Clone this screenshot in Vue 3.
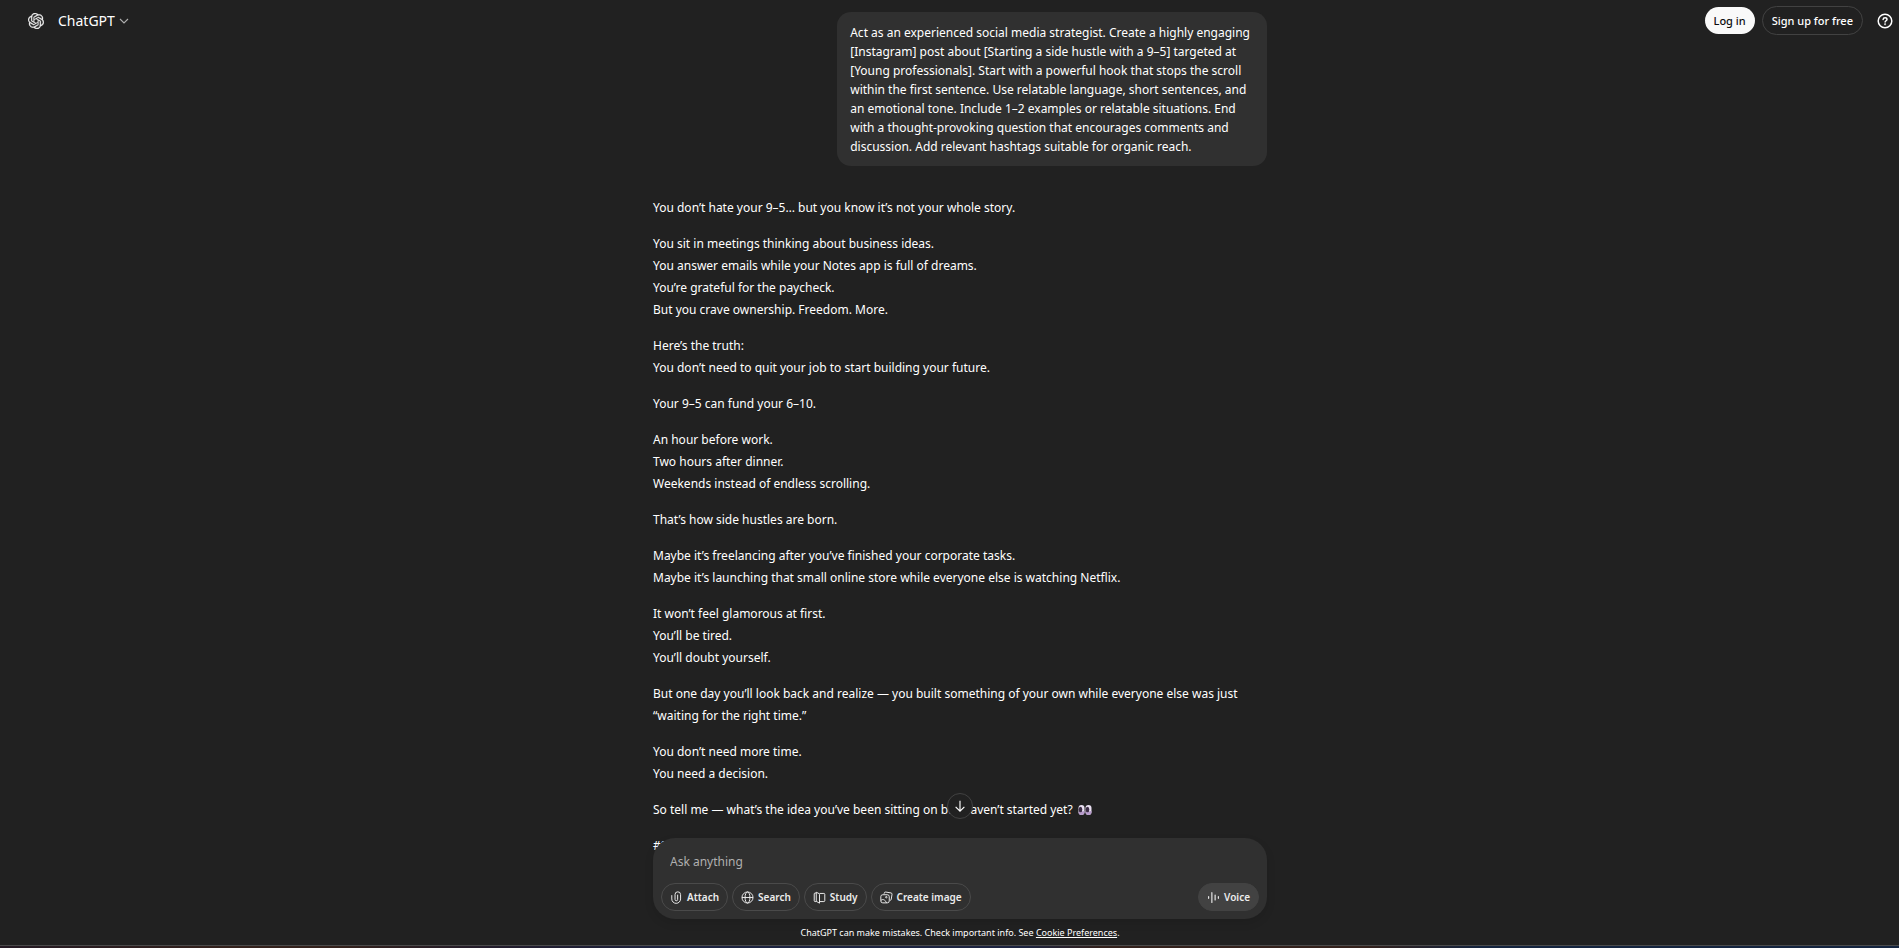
<script setup>
import { ref } from 'vue'

const message = ref('')

const prompt =
  'Act as an experienced social media strategist. Create a highly engaging [Instagram] post about [Starting a side hustle with a 9–5] targeted at [Young professionals]. Start with a powerful hook that stops the scroll within the first sentence. Use relatable language, short sentences, and an emotional tone. Include 1–2 examples or relatable situations. End with a thought-provoking question that encourages comments and discussion. Add relevant hashtags suitable for organic reach.'

const paragraphs = [
  ['You don’t hate your 9–5… but you know it’s not your whole story.'],
  [
    'You sit in meetings thinking about business ideas.',
    'You answer emails while your Notes app is full of dreams.',
    'You’re grateful for the paycheck.',
    'But you crave ownership. Freedom. More.',
  ],
  ['Here’s the truth:', 'You don’t need to quit your job to start building your future.'],
  ['Your 9–5 can fund your 6–10.'],
  ['An hour before work.', 'Two hours after dinner.', 'Weekends instead of endless scrolling.'],
  ['That’s how side hustles are born.'],
  [
    'Maybe it’s freelancing after you’ve finished your corporate tasks.',
    'Maybe it’s launching that small online store while everyone else is watching Netflix.',
  ],
  ['It won’t feel glamorous at first.', 'You’ll be tired.', 'You’ll doubt yourself.'],
  [
    'But one day you’ll look back and realize — you built something of your own while everyone else was just “waiting for the right time.”',
  ],
  ['You don’t need more time.', 'You need a decision.'],
]
</script>

<template>
  <div class="chat">
    <header class="topbar">
      <a href="#" class="logo" aria-label="Home">
        <svg viewBox="0 0 24 24" fill="currentColor" stroke="currentColor" stroke-width="0.4">
          <path d="M22.2819 9.8211a5.9847 5.9847 0 0 0-.5157-4.9108 6.0462 6.0462 0 0 0-6.5098-2.9A6.0651 6.0651 0 0 0 4.9807 4.1818a5.9847 5.9847 0 0 0-3.9977 2.9 6.0462 6.0462 0 0 0 .7427 7.0966 5.98 5.98 0 0 0 .511 4.9107 6.051 6.051 0 0 0 6.5146 2.9001A5.9847 5.9847 0 0 0 13.2599 24a6.0557 6.0557 0 0 0 5.7718-4.2058 5.9894 5.9894 0 0 0 3.9977-2.9001 6.0557 6.0557 0 0 0-.7475-7.0729zm-9.022 12.6081a4.4755 4.4755 0 0 1-2.8764-1.0408l.1419-.0804 4.7783-2.7582a.7948.7948 0 0 0 .3927-.6813v-6.7369l2.02 1.1686a.071.071 0 0 1 .038.052v5.5826a4.504 4.504 0 0 1-4.4945 4.4944zm-9.6607-4.1254a4.4708 4.4708 0 0 1-.5346-3.0137l.142.0852 4.783 2.7582a.7712.7712 0 0 0 .7806 0l5.8428-3.3685v2.3324a.0804.0804 0 0 1-.0332.0615L9.74 19.9502a4.4992 4.4992 0 0 1-6.1408-1.6464zM2.3408 7.8956a4.485 4.485 0 0 1 2.3655-1.9728V11.6a.7664.7664 0 0 0 .3879.6765l5.8144 3.3543-2.0201 1.1685a.0757.0757 0 0 1-.071 0l-4.8303-2.7865A4.504 4.504 0 0 1 2.3408 7.872zm16.5963 3.8558L13.1038 8.364 15.1192 7.2a.0757.0757 0 0 1 .071 0l4.8303 2.7913a4.4944 4.4944 0 0 1-.6765 8.1042v-5.6772a.79.79 0 0 0-.407-.667zm2.0107-3.0231l-.142-.0852-4.7735-2.7818a.7759.7759 0 0 0-.7854 0L9.409 9.2297V6.8974a.0662.0662 0 0 1 .0284-.0615l4.8303-2.7866a4.4992 4.4992 0 0 1 6.6802 4.66zM8.3065 12.863l-2.02-1.1638a.0804.0804 0 0 1-.038-.0567V6.0742a4.4992 4.4992 0 0 1 7.3757-3.4537l-.142.0805L8.704 5.459a.7948.7948 0 0 0-.3927.6813zm1.0976-2.3654l2.602-1.4998 2.6069 1.4998v2.9994l-2.5974 1.4997-2.6067-1.4997Z" />
        </svg>
      </a>
      <button type="button" class="model">
        ChatGPT
        <svg viewBox="0 0 10 10" fill="none" stroke="currentColor" stroke-width="1.1">
          <path d="M1 3l4 4 4-4" />
        </svg>
      </button>
      <div class="account">
        <button type="button" class="login">Log in</button>
        <button type="button" class="signup">Sign up for free</button>
        <button type="button" class="help" aria-label="Help">
          <svg viewBox="0 0 16 16" fill="none" stroke="currentColor" stroke-width="1.5" stroke-linecap="round">
            <circle cx="8" cy="8" r="6.8" />
            <path d="M6.1 6.5c.1-1.2.9-1.8 2-1.8s1.9.7 1.9 1.7c0 1.3-1.9 1.4-1.9 2.7" />
            <circle cx="8.1" cy="11.3" r=".3" />
          </svg>
        </button>
      </div>
    </header>

    <main class="thread">
      <p class="bubble">{{ prompt }}</p>
      <article class="answer">
        <p v-for="(lines, i) in paragraphs" :key="i">
          <template v-for="(line, j) in lines" :key="j"><br v-if="j" />{{ line }}</template>
        </p>
        <p>
          So tell me — what’s the idea you’ve been sitting on but haven’t started yet?
          <svg class="eyes" viewBox="0 0 14 12" role="img" aria-label="eyes">
            <rect x="0.5" y="1" width="6" height="10" rx="3" fill="#e9e0f2" />
            <rect x="7.5" y="1" width="6" height="10" rx="3" fill="#e9e0f2" />
            <path d="M6.5 7v1a3 3 0 0 1-6 0M13.5 7v1a3 3 0 0 1-6 0" fill="#b79acb" />
            <ellipse cx="2.5" cy="5.5" rx="1.8" ry="2.8" fill="#3b2c45" />
            <ellipse cx="9.5" cy="5.5" rx="1.8" ry="2.8" fill="#3b2c45" />
          </svg>
        </p>
        <p>#SideHustle</p>
      </article>
    </main>

    <div class="dock">
      <button type="button" class="scroll-down" aria-label="Scroll to bottom">
        <svg viewBox="0 0 16 16" fill="none" stroke="currentColor" stroke-width="1.3">
          <path d="M8 2v12M3 9l5 5 5-5" />
        </svg>
      </button>
      <form class="composer" @submit.prevent>
        <input v-model="message" type="text" placeholder="Ask anything" aria-label="Ask anything" />
        <div class="actions">
          <button type="button" class="tool">
            <svg viewBox="0 0 16 16" fill="none" stroke="currentColor" stroke-width="1.2" stroke-linecap="round">
              <path d="M2.2 5.6v4.2a5.4 5.4 0 0 0 10.8 0V4.4a3.4 3.4 0 0 0-6.8 0v6a1.6 1.6 0 0 0 3.2 0V5" />
            </svg>
            Attach
          </button>
          <button type="button" class="tool">
            <svg viewBox="0 0 16 16" fill="none" stroke="currentColor" stroke-width="1.2">
              <circle cx="8" cy="8" r="6.8" />
              <ellipse cx="8" cy="8" rx="3" ry="6.8" />
              <path d="M1.2 8h13.6" />
            </svg>
            Search
          </button>
          <button type="button" class="tool">
            <svg viewBox="0 0 16 16" fill="none" stroke="currentColor" stroke-width="1.2" stroke-linejoin="round">
              <path d="M4 2.5H2.6c-.7 0-1.1.4-1.1 1.1v8.3c0 .7.4 1.1 1.1 1.1H4M4 1.5v11.2l4 2.3V4.2c0-.5-.2-.8-.6-1L4 1.5M8 3h5.4c.7 0 1.1.4 1.1 1.1v7.8c0 .7-.4 1.1-1.1 1.1H8" />
            </svg>
            Study
          </button>
          <button type="button" class="tool">
            <svg viewBox="0 0 16 16" fill="none" stroke="currentColor" stroke-width="1.2" stroke-linejoin="round">
              <path d="M5 3.4l.3-1c.3-.9.9-1.3 1.8-1.1l6.5 1.1c.9.2 1.4.8 1.2 1.7l-1 6.2c-.1.8-.6 1.2-1.4 1.2" />
              <rect x="1" y="4.6" width="10.4" height="10" rx="2.4" />
              <circle cx="7.8" cy="7.6" r=".9" />
              <path d="M1.2 11.6c1.4-1.4 3-1.4 4.4-.3 1.3 1 2 2 2.5 3.2" />
            </svg>
            Create image
          </button>
          <button type="button" class="voice">
            <svg viewBox="0 0 16 16" fill="none" stroke="currentColor" stroke-width="1.4" stroke-linecap="round">
              <path d="M2 7v2M6 2v12M10 5v6M14 7v2" />
            </svg>
            Voice
          </button>
        </div>
      </form>
      <p class="notice">
        ChatGPT can make mistakes. Check important info. See <a href="#">Cookie Preferences</a>.
      </p>
      <div class="edge"></div>
    </div>
  </div>
</template>

<style>
body {
  margin: 0;
  background: #212121;
}
</style>

<style scoped>
.chat {
  position: relative;
  height: 100vh;
  overflow: hidden;
  color: #fff;
  background: #212121;
  font-family: "Noto Sans", "Open Sans", sans-serif;
  font-size: 12px;
}

button {
  display: flex;
  align-items: center;
  justify-content: center;
  box-sizing: border-box;
  margin: 0;
  padding: 0;
  border: 0;
  color: inherit;
  background: none;
  font: inherit;
  white-space: nowrap;
  cursor: pointer;
}

p {
  margin: 0;
}

/* header floats over the conversation */
.topbar {
  position: absolute;
  top: 0;
  left: 0;
  right: 0;
  display: flex;
  align-items: center;
  height: 41px;
  padding: 0 6px 0 28px;
}

.logo {
  display: flex;
  color: #ececec;
}

.logo svg {
  width: 16px;
  height: 16px;
}

.model {
  gap: 4px;
  margin-left: 14px;
  font-size: 14px;
}

.model svg {
  width: 10px;
  height: 10px;
  color: #afafaf;
}

.account {
  display: flex;
  align-items: center;
  gap: 7px;
  margin-left: auto;
  font-size: 11px;
  font-weight: 500;
}

.login {
  height: 27px;
  padding: 0 9px;
  border-radius: 14px;
  color: #0d0d0d;
  background: #f9f9f9;
}

.signup {
  height: 29px;
  padding: 0 9px;
  border: 1px solid #424242;
  border-radius: 15px;
}

.help {
  margin-left: 7px;
}

.help svg {
  width: 16px;
  height: 16px;
}

.thread {
  display: flex;
  flex-direction: column;
  width: 614px;
  max-width: 90%;
  margin: 0 auto;
  padding: 12px 0 0 21px;
}

.bubble {
  align-self: flex-end;
  box-sizing: border-box;
  width: 70%;
  padding: 11px 13px 10px;
  border-radius: 14px;
  background: #303030;
  line-height: 19px;
}

.answer {
  display: flex;
  flex-direction: column;
  gap: 14px;
  margin-top: 31px;
  line-height: 22px;
}

.eyes {
  width: 14px;
  height: 12px;
  margin-left: 2px;
  vertical-align: -2px;
}

/* input area stays on top of the scrolled text */
.dock {
  position: absolute;
  left: 0;
  right: 0;
  bottom: 0;
  display: flex;
  flex-direction: column;
  align-items: center;
}

.scroll-down {
  width: 26px;
  height: 26px;
  margin: 0 0 19px 21px;
  border: 1px solid #424242;
  border-radius: 50%;
  background: #212121;
}

.scroll-down svg {
  width: 14px;
  height: 14px;
}

.composer {
  display: flex;
  flex-direction: column;
  justify-content: space-between;
  box-sizing: border-box;
  width: 614px;
  max-width: 90%;
  height: 81px;
  margin-left: 21px;
  padding: 13px 8px 8px;
  border-radius: 22px;
  background: #303030;
  box-shadow: 0 4px 10px #0000001a;
}

input {
  margin: 0 9px;
  padding: 0;
  border: 0;
  outline: 0;
  color: inherit;
  background: none;
  font: inherit;
  line-height: 22px;
}

input::placeholder {
  color: #afafaf;
  opacity: 1;
}

.actions {
  display: flex;
  gap: 4px;
  font-size: 10px;
  font-weight: 600;
}

.tool,
.voice {
  gap: 4px;
  height: 28px;
  padding: 0 8px;
  border: 1px solid #4a4a4a;
  border-radius: 14px;
  color: #ececec;
}

.tool svg,
.voice svg {
  width: 13px;
  height: 13px;
}

.voice {
  margin-left: auto;
  border-color: #424242;
  background: #424242;
}

.notice {
  margin-left: 21px;
  padding-top: 2px;
  font-size: 9px;
  line-height: 24px;
}

.notice a {
  color: inherit;
}

.edge {
  align-self: stretch;
  height: 2px;
  border-top: 1px solid #4a4a4a;
  background: linear-gradient(90deg, #241a24, #33211c 12%, #33211c 18%, #221c2c 26%, #1c2340 36%, #1c2340 54%, #33211c 58%, #33211c 72%, #14243f 78%);
}
</style>
